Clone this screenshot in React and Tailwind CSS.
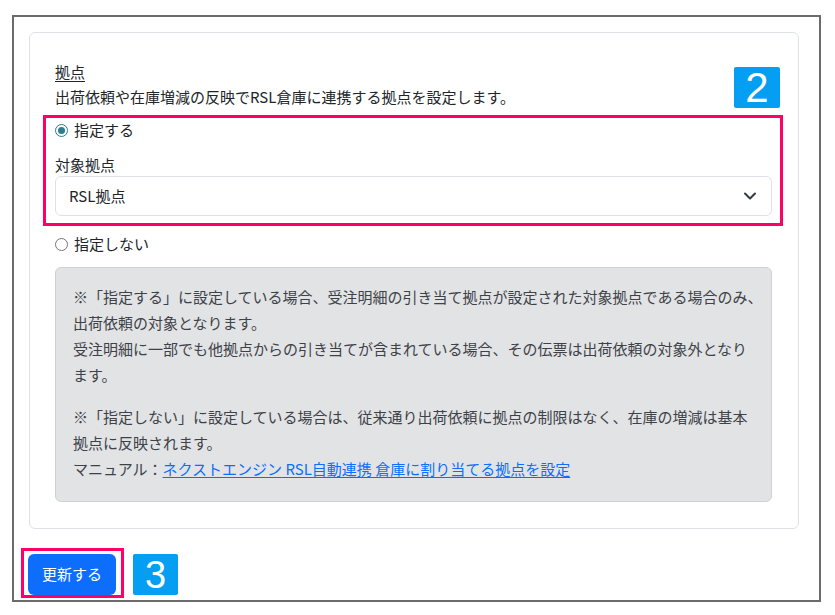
import React, { useState } from "react";

const NOTE_SHITEI = [
  "※「指定する」に設定している場合、受注明細の引き当て拠点が設定された対象拠点である場合のみ、",
  "出荷依頼の対象となります。",
  "受注明細に一部でも他拠点からの引き当てが含まれている場合、その伝票は出荷依頼の対象外となり",
  "ます。",
];

const NOTE_NONE = [
  "※「指定しない」に設定している場合は、従来通り出荷依頼に拠点の制限はなく、在庫の増減は基本",
  "拠点に反映されます。",
];

function Radio({ checked, label, onClick }) {
  return (
    <label className="flex h-[25px] cursor-pointer items-center gap-[6px]" onClick={onClick}>
      {checked ? (
        <span className="flex h-[13px] w-[13px] items-center justify-center rounded-full border-[1.5px] border-[#2b7f8d] bg-white">
          <span className="h-[7px] w-[7px] rounded-full bg-[#2b7f8d]" />
        </span>
      ) : (
        <span className="h-[13px] w-[13px] rounded-full border border-[#767676] bg-white" />
      )}
      <span>{label}</span>
    </label>
  );
}

export default function App() {
  const [mode, setMode] = useState("on");

  return (
    <div className="h-[615px] w-[835px] bg-white pl-[12px] pt-[15px] font-['Noto_Sans_CJK_JP','Noto_Sans',sans-serif] text-[15px] text-[#212529]">
      <div className="h-[587px] w-[809px] border-2 border-[#6b6b6b] pl-[15px] pt-[15px]">
        {/* カード */}
        <div className="relative w-[770px] rounded-[6px] border border-[#dee2e6] pb-[26px] pl-[25px] pr-[26px] pt-[26px]">
          <div className="leading-[25px] underline underline-offset-[3px]">拠点</div>
          <div className="leading-[25px]">出荷依頼や在庫増減の反映でRSL倉庫に連携する拠点を設定します。</div>

          {/* 番号バッジ 2 */}
          <div className="absolute right-[18px] top-[34px] flex h-[41px] w-[46px] items-center justify-center rounded-[2px] bg-[#049ef2] font-['Liberation_Sans',sans-serif] text-[42px] leading-none text-white">
            2
          </div>

          {/* 指定する（強調枠） */}
          <div className="-ml-[12px] -mr-[11px] mt-[6px] border-[3px] border-[#ff0066] pb-[7px] pl-[9px] pr-[8px]">
            <Radio checked={mode === "on"} label="指定する" onClick={() => setMode("on")} />
            <div className="mt-[10px] leading-[23px]">対象拠点</div>
            <div className="flex h-[40px] items-center justify-between rounded-[6px] border border-[#dee2e6] bg-white pl-[13px] pr-[15px]">
              <span>RSL拠点</span>
              <svg width="12" height="8" viewBox="0 0 12 8" fill="none">
                <path d="M1 1.5 6 6.5 11 1.5" stroke="#343a40" strokeWidth="2" strokeLinecap="round" strokeLinejoin="round" />
              </svg>
            </div>
          </div>

          <div className="mt-[6px]">
            <Radio checked={mode === "off"} label="指定しない" onClick={() => setMode("off")} />
          </div>

          {/* 注意書き */}
          <div className="mt-[10px] rounded-[6px] border border-[#cfd1d4] bg-[#e2e3e5] px-[17px] pb-[19px] pt-[16px] leading-[26px] text-[#3d4248]">
            <div>
              {NOTE_SHITEI.map((t) => (
                <div key={t} className="whitespace-nowrap">{t}</div>
              ))}
            </div>
            <div className="mt-[16px]">
              {NOTE_NONE.map((t) => (
                <div key={t} className="whitespace-nowrap">{t}</div>
              ))}
              <div className="whitespace-nowrap">
                マニュアル：
                <a href="#" className="text-[#0d6efd] underline underline-offset-[2px]">
                  ネクストエンジン RSL自動連携 倉庫に割り当てる拠点を設定
                </a>
              </div>
            </div>
          </div>
        </div>

        {/* 更新ボタン */}
        <div className="-ml-[8px] mt-[19px] flex items-start gap-[9px]">
          <div className="border-[3px] border-[#ff0066] pb-[0px] pl-[4px] pr-[5px] pt-[3px]">
            <button
              type="button"
              className="h-[41px] w-[88px] rounded-[6px] bg-[#0d6efd] text-[15px] text-white"
            >
              更新する
            </button>
          </div>
          <div className="mt-[6px] flex h-[41px] w-[45px] items-center justify-center rounded-[2px] bg-[#049ef2] font-['Liberation_Sans',sans-serif] text-[38px] leading-none text-white">
            3
          </div>
        </div>
      </div>
    </div>
  );
}
